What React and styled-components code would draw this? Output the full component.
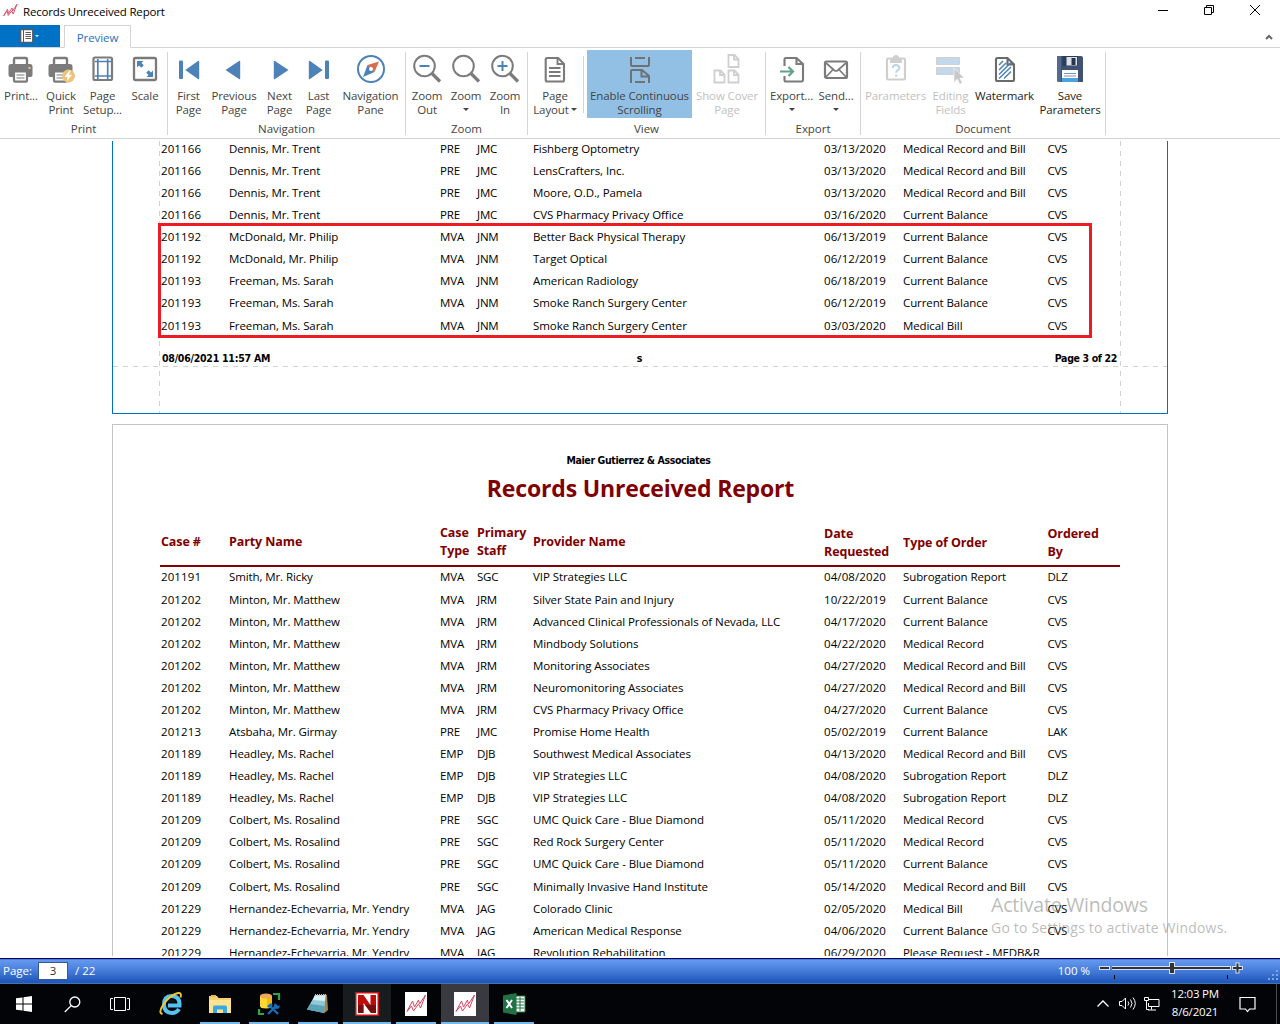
import React from "react";
import styled, { createGlobalStyle, css } from "styled-components";

const maroon = "#800000";
const gray = "#7b7b7b";
const blue = "#4d82b8";
const faded = "#cfcfcf";

const Global = createGlobalStyle`
  * { box-sizing: border-box; }
  body { margin: 0; background: #fff; overflow: hidden; }
  svg { display: block; flex: none; }
`;

const Window = styled.div`
  width: 1280px;
  height: 1024px;
  display: flex;
  flex-direction: column;
  background: #fff;
  color: #000;
  font-family: "Open Sans", "Noto Sans", sans-serif;
  font-size: 11.5px;
  white-space: nowrap;
`;

/* ---------- title bar and tabs ---------- */
const TitleBar = styled.header`
  height: 25px;
  flex: none;
  display: flex;
  align-items: flex-start;
  padding: 3px 19px 0 2px;
`;
const Title = styled.div`
  flex: 1;
  margin-left: 5px;
  line-height: 17px;
  letter-spacing: -0.18px;
`;
const WindowButtons = styled.div`
  display: flex;
  gap: 34px;
  padding-top: 1px;
`;
const TabBar = styled.nav`
  height: 23px;
  flex: none;
  display: flex;
  align-items: stretch;
  border-bottom: 1px solid #d4d4d4;
`;
const FileButton = styled.div`
  width: 60px;
  height: 22px;
  margin-right: 4px;
  background: #0072c6;
  display: flex;
  align-items: center;
  justify-content: center;
`;
const Tab = styled.div`
  width: 67px;
  height: 23px;
  border: 1px solid #d4d4d4;
  border-bottom-color: #fff;
  color: #2a6fc0;
  line-height: 24px;
  text-align: center;
  letter-spacing: -0.1px;
`;
const Collapse = styled.div`
  margin-left: auto;
  padding: 9px 7px 0 0;
`;

/* ---------- ribbon ---------- */
const Ribbon = styled.section`
  height: 91px;
  flex: none;
  display: flex;
  border-bottom: 1px solid #d4d4d4;
  color: #444;
`;
const Group = styled.div`
  width: ${(p) => p.$w}px;
  height: 83px;
  margin-top: 4px;
  display: flex;
  flex-direction: column;
  border-right: 1px solid #d4d4d4;
`;
const Items = styled.div`
  height: 66px;
  display: flex;
  margin-top: -2px;
  padding-left: ${(p) => p.$pad || 0}px;
`;
const GroupName = styled.div`
  line-height: 16px;
  text-align: center;
  margin-top: 5px;
  letter-spacing: -0.05px;
`;
const Button = styled.div`
  width: ${(p) => p.$w}px;
  height: 68px;
  flex: none;
  display: flex;
  flex-direction: column;
  align-items: center;
  line-height: 14px;
  padding-top: 4px;
  letter-spacing: -0.12px;
  ${(p) => p.$off && css`color: #bfbfbf;`}
  ${(p) => p.$dark && css`color: #222;`}
  ${(p) => p.$on && css`background: #92c0e4;`}
`;
const IconBox = styled.div`
  height: 35px;
  padding-top: ${(p) => p.$top}px;
  display: flex;
  align-items: flex-start;
  justify-content: center;
`;
const Line = styled.div`
  height: 14px;
  display: flex;
  align-items: center;
  gap: 2px;
`;
const Separator = styled.div`
  width: 1px;
  height: 57px;
  margin: 6px 3px 0 3px;
  background: #d4d4d4;
`;
const ArrowShape = styled.svg`
  margin-bottom: 2px;
`;
const Arrow = () => (
  <ArrowShape width="6" height="3" viewBox="0 0 6 3"><path d="M0 0h6L3 3z" fill="#444" /></ArrowShape>
);

/* ---------- document area ---------- */
const Viewer = styled.main`
  height: 817px;
  flex: none;
  padding: 2px 112px 0;
  overflow: hidden;
  position: relative;
`;
const Page = styled.section`
  width: 1056px;
  border: 1px solid ${(p) => (p.$active ? "#0072c6" : "#c4c4c4")};
  padding-left: 47px;
  ${(p) =>
    p.$active &&
    css`
      height: 273px;
      border-top: 0;
      margin-bottom: 10px;
      background:
        repeating-linear-gradient(90deg, #d2d2d2 0 5px, transparent 5px 10px) 0 225px / 100% 1px no-repeat,
        repeating-linear-gradient(180deg, #d2d2d2 0 5px, transparent 5px 10px) 46px 0 / 1px 100% no-repeat,
        repeating-linear-gradient(180deg, #d2d2d2 0 5px, transparent 5px 10px) 1007px 0 / 1px 100% no-repeat;
    `}
`;
const columns = "68px 211px 37px 56px 291px 79px 144.5px 80px";
const Row = styled.div`
  height: ${(p) => (p.$tall ? 23 : 22)}px;
  padding-top: ${(p) => (p.$tall ? 1 : 0)}px;
  line-height: 22px;
  display: grid;
  grid-template-columns: ${columns};
  padding-left: 1px;
  ${(p) => p.$first && css`height: 19px; line-height: 16px;`}
`;
const Cell = styled.div`
  letter-spacing: ${(p) => p.$ls || 0}px;
`;
const Footer = styled.div`
  display: grid;
  grid-template-columns: 1fr auto 1fr;
  width: 959px;
  padding: 14px 2px 0 2px;
  font: bold 10.5px/14px "DejaVu Sans Condensed", "Open Sans", sans-serif;
  letter-spacing: -0.25px;
`;
const FooterEnd = styled.div`
  text-align: right;
  letter-spacing: -0.35px;
`;
const Firm = styled.div`
  width: 957px;
  padding-top: 28px;
  text-align: center;
  font: bold 10.5px/14px "DejaVu Sans Condensed", "Open Sans", sans-serif;
  letter-spacing: -0.39px;
`;
const ReportTitle = styled.h1`
  margin: 5px 0 0;
  width: 961px;
  text-align: center;
  color: ${maroon};
  font-size: 23px;
  line-height: 32px;
  font-weight: 700;
  letter-spacing: -0.16px;
`;
const Heads = styled.div`
  width: 960px;
  height: 63px;
  margin-bottom: -1px;
  border-bottom: 2px solid ${maroon};
  display: grid;
  grid-template-columns: ${columns};
  padding: 19px 0 0 1px;
  align-items: center;
  align-content: start;
  color: ${maroon};
  font-weight: 700;
  font-size: 12.5px;
  line-height: 18px;
  letter-spacing: -0.1px;
`;
const Head = styled.div`
  white-space: pre;
  margin-top: ${(p) => (p.$low ? 2 : 0)}px;
`;
const Highlight = styled.div`
  position: absolute;
  left: 158px;
  top: 84px;
  width: 934px;
  height: 115px;
  border: 3px solid #ed1c24;
`;
const Watermark = styled.div`
  position: absolute;
  left: 991px;
  top: 753px;
  color: rgba(120, 120, 120, 0.5);
  font-size: 14px;
  line-height: 20px;
  letter-spacing: 0.2px;
`;
const WatermarkTitle = styled.div`
  font-size: 19.5px;
  line-height: 26px;
  letter-spacing: -0.2px;
`;

/* ---------- status bar ---------- */
const StatusBar = styled.footer`
  height: 28px;
  flex: none;
  display: flex;
  align-items: center;
  border-top: 2px solid #fff;
  box-shadow: inset 0 1px 0 #00005a, inset 0 2px 0 #4a80dd;
  background: linear-gradient(180deg, #6c9ff4 0%, #4d83df 40%, #1e55b8 94%, #4472ae 96%);
  color: #fff;
  padding: 0 0 2px 3px;
`;
const PageNumber = styled.div`
  width: 30px;
  height: 18px;
  margin: 1px 7px 0 6px;
  border: 1px solid #34599b;
  background: #fff;
  color: #333;
  line-height: 16px;
  text-align: center;
`;
const Zoom = styled.div`
  margin-left: auto;
  display: flex;
  align-items: center;
  gap: 9px;
`;
const Slider = styled.svg`
  margin-top: 2px;
`;

/* ---------- taskbar ---------- */
const Taskbar = styled.div`
  height: 40px;
  flex: none;
  display: flex;
  background: #020407;
  color: #fff;
`;
const Slot = styled.div`
  width: 48px;
  height: 40px;
  margin-right: ${(p) => (p.$app ? 1 : 0)}px;
  margin-left: ${(p) => p.$lead || 0}px;
  display: flex;
  align-items: center;
  justify-content: center;
  background: ${(p) => p.$bg || "transparent"};
  border-bottom: 2px solid transparent;
  padding-top: 2px;
  ${(p) =>
    p.$run &&
    css`
      background-image: linear-gradient(#76b9ed, #76b9ed);
      background-size: ${p.$wide ? "48px" : "40px"} 2px;
      background-position: 50% 100%;
      background-origin: border-box;
      background-clip: border-box;
      background-repeat: no-repeat;
    `}
`;
const Tray = styled.div`
  margin-left: auto;
  display: flex;
  align-items: center;
`;
const Network = styled.svg`
  margin-left: -9px;
`;
const Clock = styled.div`
  width: 56px;
  margin: 0 16px 2px 7px;
  text-align: center;
  line-height: 18px;
  letter-spacing: -0.2px;
`;
const Notice = styled.div`
  padding-right: 20px;
  margin-right: 3px;
  height: 40px;
  display: flex;
  align-items: center;
  border-right: 1px solid #4a4c50;
`;

/* ---------- icons ---------- */
const Chart = () => (
  <svg width="16" height="16" viewBox="0 0 16 16" fill="none" stroke="#d9536f" strokeWidth="1">
    <path d="M1.500 13L5.500 6.200l1 4.300L10 5l.6 3L15 1.200 11.200 11l-1.400-3L6.300 12.400 5 8z" />
  </svg>
);
const Printer = ({ quick }) => (
  <svg width="28" height="30" viewBox="0 0 28 30">
    <path d="M7 10V4.200q0-1.200 1.200-1.200h10.600q1.200 0 1.200 1.200V10" fill="none" stroke={gray} strokeWidth="2.400" />
    <path d="M4 9h19q2.500 0 2.500 2.500V20q0 2-2 2H21v-5H6v5H3.500q-2 0-2-2v-8.500Q1.500 9 4 9z" fill={gray} />
    <path d="M7 16.500v9q0 1.200 1.200 1.200h10.600q1.200 0 1.200-1.200v-9z" fill="#fff" stroke={gray} strokeWidth="2.200" />
    <path d="M9.500 20h8M9.500 23h8" stroke={gray} strokeWidth="1.200" />
    {!quick && <rect x="21.500" y="12" width="2" height="2" fill="#f0c77c" />}
    {quick && <circle cx="21.500" cy="21" r="6.500" fill="#edc47c" />}
    {quick && <path d="M22.500 15.500l-5 6.500h3.200l-1 4.500 5.300-6.700h-3.200l2-4.300z" fill="#fff" />}
  </svg>
);
const Setup = () => (
  <svg width="22" height="26" viewBox="0 0 22 26" fill="none">
    <rect x="1.500" y="1.500" width="18.500" height="22.500" rx="1.500" stroke={gray} strokeWidth="2.200" />
    <path d="M5.800 3v20M15.700 3v20M3 5.500h16M3 20h16" stroke={blue} strokeWidth="1.700" />
  </svg>
);
const ScaleIcon = () => (
  <svg width="26" height="26" viewBox="0 0 26 26">
    <rect x="2" y="2" width="22" height="22" rx="1.500" fill="#fff" stroke={gray} strokeWidth="2.300" />
    <path d="M5 5h6.500L9.500 7l2.300 2.300-2.500 2.500L7 9.500l-2 2zM21 21h-6.500l2-2-2.300-2.300 2.500-2.500 2.300 2.300 2-2z" fill={blue} />
  </svg>
);
const Step = ({ flip, bar }) => (
  <svg width="22" height="22" viewBox="0 0 22 22">
    <g transform={flip ? "translate(22 0) scale(-1 1)" : undefined} fill={blue}>
      {bar && <rect x="1" y="1.500" width="4" height="18.500" rx="1" />}
      <path d={bar ? "M7.300 11L20 2q1.200-.8 1.200.7v16.600q0 1.500-1.200.7z" : "M2.500 11L16 2q1.200-.8 1.200.7v16.600q0 1.500-1.200.7z"} />
    </g>
  </svg>
);
const Compass = () => (
  <svg width="30" height="30" viewBox="0 0 30 30">
    <circle cx="15" cy="15" r="13" fill="none" stroke={blue} strokeWidth="2" />
    <path d="M23 7.500L18.500 18 11.500 11z" fill="#dc6a4c" />
    <path d="M7 23l4.500-12 7 7z" fill={blue} />
    <circle cx="15" cy="15" r="2" fill="#fff" />
  </svg>
);
const Lens = ({ sign }) => (
  <svg width="30" height="30" viewBox="0 0 30 30" fill="none">
    <circle cx="12.500" cy="12" r="10.300" stroke={gray} strokeWidth="2" />
    <path d="M20 19.500l8 8" stroke={gray} strokeWidth="3.200" />
    {sign && <path d={sign === "+" ? "M7.500 12h10M12.500 7v10" : "M7.500 12h10"} stroke={blue} strokeWidth="2" />}
  </svg>
);
const Doc = () => (
  <svg width="22" height="28" viewBox="0 0 22 28" fill="none" stroke={gray}>
    <path d="M3.200 2h11L20 8v16q0 1.500-1.500 1.500H3.200q-1.500 0-1.500-1.500V3.500Q1.700 2 3.200 2z" strokeWidth="2.100" />
    <path d="M13.500 2v6H20M5 12h11.500M5 16h11.500M5 20h11.500" strokeWidth="1.900" />
  </svg>
);
const Continuous = () => (
  <svg width="22" height="28" viewBox="0 0 22 28" fill="none" stroke="#6d7275" strokeWidth="2">
    <path d="M2 0v8q0 1 1 1h16q1 0 1-1V0M6 1h10" />
    <path d="M2 26V14q0-1 1-1h10l7 6v7M12.500 13v6.500H20M6 25h10" />
  </svg>
);
const MiniPage = ({ x, y }) => (
  <g transform={`translate(${x} ${y})`}>
    <path d="M1 1h6l4 4v8H1zM6.500 1v4.500H11" fill="none" stroke={faded} strokeWidth="1.800" />
  </g>
);
const Cover = () => (
  <svg width="28" height="32" viewBox="0 0 28 32">
    <MiniPage x={14.500} y={0} /><MiniPage x={0.500} y={15.500} /><MiniPage x={14.500} y={15.500} />
  </svg>
);
const ExportIcon = () => (
  <svg width="26" height="28" viewBox="0 0 26 28" fill="none">
    <path d="M5.500 10V3.500q0-1.500 1.500-1.500h10.500L24 8v15.500q0 2-1.500 2H7q-1.500 0-1.500-1.500v-4M17.500 2v6H24" stroke={gray} strokeWidth="2.100" />
    <path d="M1 15.500h12M9.500 11l4.500 4.500L9.500 20" stroke="#5fa18b" strokeWidth="2.200" />
  </svg>
);
const Mail = () => (
  <svg width="26" height="20" viewBox="0 0 26 20" fill="none" stroke={gray}>
    <rect x="2" y="1.500" width="22" height="16.500" rx="1.500" strokeWidth="2.200" />
    <path d="M3 3l8.500 7.500q1.500 1 3 0L23 3M3 17l7-7.500M23 17l-7-7.500" strokeWidth="1.700" />
  </svg>
);
const Clipboard = () => (
  <svg width="22" height="28" viewBox="0 0 22 28">
    <rect x="2" y="4.500" width="18" height="21" rx="1" fill="none" stroke={faded} strokeWidth="2.200" />
    <path d="M5 9V4h3q0-3 3-3t3 3h3v5z" fill={faded} />
    <path d="M7.700 14q.3-3 3.300-3t3.300 2.700q0 1.600-1.800 2.700-1.300 .9-1.300 2.300M11.200 20.500v2.200" fill="none" stroke="#bcd3ea" strokeWidth="2" />
  </svg>
);
const Fields = () => (
  <svg width="30" height="30" viewBox="0 0 30 30">
    <path d="M.500 2.500h23v7H.500zM.500 12.500h23v7H.500z" fill="#c3d8eb" stroke="#d0d0d0" strokeWidth="1" />
    <path d="M18 13v14.500l3.400-3.400 2.300 5.200 2.600-1.200-2.400-5H28.500z" fill="#c8c8c8" stroke="#fff" strokeWidth=".6" />
  </svg>
);
const WatermarkIcon = () => (
  <svg width="22" height="28" viewBox="0 0 22 28" fill="none">
    <path d="M3.500 2h10L20 8.500v15q0 1.500-1.500 1.500H3.500Q2 25 2 23.500v-20Q2 2 3.500 2zM13.500 2v6.500H20" stroke="#6a6a6a" strokeWidth="2.100" />
    <path d="M5 9l4-4M5 14l7-7M5 18.500l12-12M5 22.500L17 11M10 22.500l7-7" stroke={blue} strokeWidth="1.500" />
  </svg>
);
const Floppy = () => (
  <svg width="28" height="28" viewBox="0 0 28 28">
    <path d="M2 1h23q2 0 2 2v24H3q-2 0-2-2V1z" fill="#3f5272" />
    <path d="M1 1h4v26H3q-2 0-2-2z" fill="#536a8e" />
    <path d="M6.500 1h15v10h-15z" fill="#2c3b58" />
    <path d="M10.500 2h10.500v8.500H10.500z" fill="#dce1e6" />
    <path d="M15.500 3h4v7h-4z" fill="#273650" />
    <path d="M6 15h16v12H6z" fill="#fff" />
    <path d="M6 23h16v4H6z" fill="#4ba3dd" />
    <path d="M8 18.500h12M8 21h12" stroke="#7d91b3" />
  </svg>
);

/* ---------- data ---------- */
const firstPage = [
  ["201166", "Dennis, Mr. Trent", "PRE", "JMC", "Fishberg Optometry", "03/13/2020", "Medical Record and Bill", "CVS"],
  ["201166", "Dennis, Mr. Trent", "PRE", "JMC", "LensCrafters, Inc.", "03/13/2020", "Medical Record and Bill", "CVS"],
  ["201166", "Dennis, Mr. Trent", "PRE", "JMC", "Moore, O.D., Pamela", "03/13/2020", "Medical Record and Bill", "CVS"],
  ["201166", "Dennis, Mr. Trent", "PRE", "JMC", "CVS Pharmacy Privacy Office", "03/16/2020", "Current Balance", "CVS"],
  ["201192", "McDonald, Mr. Philip", "MVA", "JNM", "Better Back Physical Therapy", "06/13/2019", "Current Balance", "CVS"],
  ["201192", "McDonald, Mr. Philip", "MVA", "JNM", "Target Optical", "06/12/2019", "Current Balance", "CVS"],
  ["201193", "Freeman, Ms. Sarah", "MVA", "JNM", "American Radiology", "06/18/2019", "Current Balance", "CVS"],
  ["201193", "Freeman, Ms. Sarah", "MVA", "JNM", "Smoke Ranch Surgery Center", "06/12/2019", "Current Balance", "CVS"],
  ["201193", "Freeman, Ms. Sarah", "MVA", "JNM", "Smoke Ranch Surgery Center", "03/03/2020", "Medical Bill", "CVS"],
];
const secondPage = [
  ["201191", "Smith, Mr. Ricky", "MVA", "SGC", "VIP Strategies LLC", "04/08/2020", "Subrogation Report", "DLZ"],
  ["201202", "Minton, Mr. Matthew", "MVA", "JRM", "Silver State Pain and Injury", "10/22/2019", "Current Balance", "CVS"],
  ["201202", "Minton, Mr. Matthew", "MVA", "JRM", "Advanced Clinical Professionals of Nevada, LLC", "04/17/2020", "Current Balance", "CVS"],
  ["201202", "Minton, Mr. Matthew", "MVA", "JRM", "Mindbody Solutions", "04/22/2020", "Medical Record", "CVS"],
  ["201202", "Minton, Mr. Matthew", "MVA", "JRM", "Monitoring Associates", "04/27/2020", "Medical Record and Bill", "CVS"],
  ["201202", "Minton, Mr. Matthew", "MVA", "JRM", "Neuromonitoring Associates", "04/27/2020", "Medical Record and Bill", "CVS"],
  ["201202", "Minton, Mr. Matthew", "MVA", "JRM", "CVS Pharmacy Privacy Office", "04/27/2020", "Current Balance", "CVS"],
  ["201213", "Atsbaha, Mr. Girmay", "PRE", "JMC", "Promise Home Health", "05/02/2019", "Current Balance", "LAK"],
  ["201189", "Headley, Ms. Rachel", "EMP", "DJB", "Southwest Medical Associates", "04/13/2020", "Medical Record and Bill", "CVS"],
  ["201189", "Headley, Ms. Rachel", "EMP", "DJB", "VIP Strategies LLC", "04/08/2020", "Subrogation Report", "DLZ"],
  ["201189", "Headley, Ms. Rachel", "EMP", "DJB", "VIP Strategies LLC", "04/08/2020", "Subrogation Report", "DLZ"],
  ["201209", "Colbert, Ms. Rosalind", "PRE", "SGC", "UMC Quick Care - Blue Diamond", "05/11/2020", "Medical Record", "CVS"],
  ["201209", "Colbert, Ms. Rosalind", "PRE", "SGC", "Red Rock Surgery Center", "05/11/2020", "Medical Record", "CVS"],
  ["201209", "Colbert, Ms. Rosalind", "PRE", "SGC", "UMC Quick Care - Blue Diamond", "05/11/2020", "Current Balance", "CVS"],
  ["201209", "Colbert, Ms. Rosalind", "PRE", "SGC", "Minimally Invasive Hand Institute", "05/14/2020", "Medical Record and Bill", "CVS"],
  ["201229", "Hernandez-Echevarria, Mr. Yendry", "MVA", "JAG", "Colorado Clinic", "02/05/2020", "Medical Bill", "CVS"],
  ["201229", "Hernandez-Echevarria, Mr. Yendry", "MVA", "JAG", "American Medical Response", "04/06/2020", "Current Balance", "CVS"],
  ["201229", "Hernandez-Echevarria, Mr. Yendry", "MVA", "JAG", "Revolution Rehabilitation", "06/29/2020", "Please Request - MEDB&R", ""],
];
const spacing = [0.1, -0.1, -0.1, -0.2, -0.07, 0.1, -0.1, -0.3];

const Rows = ({ rows, tall, first }) =>
  rows.map((r, i) => (
    <Row key={i} $tall={tall.includes(i)} $first={first && i === 0}>
      {r.map((c, j) => <Cell key={j} $ls={spacing[j]}>{c}</Cell>)}
    </Row>
  ));

const Tool = ({ w, icon, top = 0, lines, drop, ...state }) => (
  <Button $w={w} {...state}>
    <IconBox $top={top}>{icon}</IconBox>
    {lines.map((l, i) => <Line key={l}>{l}{drop === "inline" && i === 1 && <Arrow />}</Line>)}
    {drop === "below" && <Line><Arrow /></Line>}
  </Button>
);

const ChartTile = () => (
  <svg width="22" height="24" viewBox="0 0 22 24">
    <path d="M0 0h22v24H0z" fill="#fff" />
    <path d="M2 19.500L7.500 9l2 6 4-7 1 4 6-9-5 13-2-4-5 7-2-5z" fill="none" stroke="#d84464" />
  </svg>
);

export default function App() {
  return (
    <Window>
      <Global />
      <TitleBar>
        <Chart />
        <Title>Records Unreceived Report</Title>
        <WindowButtons>
          <svg width="12" height="12" viewBox="0 0 12 12"><path d="M1 6.500h10" stroke="#000" /></svg>
          <svg width="12" height="12" viewBox="0 0 12 12" fill="none" stroke="#000"><path d="M1.500 3.500h7v7h-7zM3.500 3.500v-2h7v7h-2" /></svg>
          <svg width="12" height="12" viewBox="0 0 12 12" fill="none" stroke="#000"><path d="M1 1l10 10M11 1L1 11" /></svg>
        </WindowButtons>
      </TitleBar>
      <TabBar>
        <FileButton>
          <svg width="20" height="14" viewBox="0 0 20 14">
            <path d="M.7.700h12v12.600H.7z" fill="#fff" stroke="#5b5b5b" strokeWidth="1.200" />
            <path d="M3.500 1v12M5.500 3.500h5.500M5.500 5.500h5.500M5.500 7.500h5.500M5.500 9.500h5.500" stroke="#5b5b5b" />
            <path d="M15 6h4l-2 2.200z" fill="#cfe3f5" />
          </svg>
        </FileButton>
        <Tab>Preview</Tab>
        <Collapse>
          <svg width="8" height="6" viewBox="0 0 8 6"><path d="M1 5l3-3 3 3" fill="none" stroke="#666" strokeWidth="2" /></svg>
        </Collapse>
      </TabBar>

      <Ribbon>
        <Group $w={168}>
          <Items>
            <Tool w={42} top={1} icon={<Printer />} lines={["Print..."]} />
            <Tool w={38} top={1} icon={<Printer quick />} lines={["Quick", "Print"]} />
            <Tool w={45} top={2} icon={<Setup />} lines={["Page", "Setup..."]} />
            <Tool w={40} top={2} icon={<ScaleIcon />} lines={["Scale"]} />
          </Items>
          <GroupName>Print</GroupName>
        </Group>
        <Group $w={238}>
          <Items>
            <Tool w={41} top={5} icon={<Step bar />} lines={["First", "Page"]} />
            <Tool w={50} top={5} icon={<Step />} lines={["Previous", "Page"]} />
            <Tool w={41} top={5} icon={<Step flip />} lines={["Next", "Page"]} />
            <Tool w={37} top={5} icon={<Step bar flip />} lines={["Last", "Page"]} />
            <Tool w={67} top={0} icon={<Compass />} lines={["Navigation", "Pane"]} />
          </Items>
          <GroupName>Navigation</GroupName>
        </Group>
        <Group $w={122}>
          <Items $pad={1}>
            <Tool w={40} icon={<Lens sign="-" />} lines={["Zoom", "Out"]} />
            <Tool w={38} icon={<Lens />} lines={["Zoom"]} drop="below" />
            <Tool w={40} icon={<Lens sign="+" />} lines={["Zoom", "In"]} />
          </Items>
          <GroupName>Zoom</GroupName>
        </Group>
        <Group $w={238}>
          <Items $pad={2}>
            <Tool w={50} top={2} icon={<Doc />} lines={["Page", "Layout"]} drop="inline" />
            <Separator />
            <Tool w={105} top={3} icon={<Continuous />} lines={["Enable Continuous", "Scrolling"]} $on />
            <Tool w={70} icon={<Cover />} lines={["Show Cover", "Page"]} $off />
          </Items>
          <GroupName>View</GroupName>
        </Group>
        <Group $w={95}>
          <Items $pad={4}>
            <Tool w={43} top={2} icon={<ExportIcon />} lines={["Export..."]} drop="below" />
            <Tool w={46} top={6} icon={<Mail />} lines={["Send..."]} drop="below" />
          </Items>
          <GroupName>Export</GroupName>
        </Group>
        <Group $w={245}>
          <Items $pad={1}>
            <Tool w={67} icon={<Clipboard />} lines={["Parameters"]} $off />
            <Tool w={43} top={1} icon={<Fields />} lines={["Editing", "Fields"]} $off />
            <Tool w={65} top={2} icon={<WatermarkIcon />} lines={["Watermark"]} $dark />
            <Tool w={66} top={1} icon={<Floppy />} lines={["Save", "Parameters"]} $dark />
          </Items>
          <GroupName>Document</GroupName>
        </Group>
      </Ribbon>

      <Viewer>
        <Page $active>
          <Rows rows={firstPage} tall={[8]} first />
          <Footer>
            <div>08/06/2021 11:57 AM</div>
            <div>s</div>
            <FooterEnd>Page 3 of 22</FooterEnd>
          </Footer>
        </Page>
        <Page>
          <Firm>Maier Gutierrez &amp; Associates</Firm>
          <ReportTitle>Records Unreceived Report</ReportTitle>
          <Heads>
            <Head>Case #</Head>
            <Head>Party Name</Head>
            <Head>{"Case\nType"}</Head>
            <Head>{"Primary\nStaff"}</Head>
            <Head>Provider Name</Head>
            <Head $low>{"Date\nRequested"}</Head>
            <Head $low>Type of Order</Head>
            <Head $low>{"Ordered\nBy"}</Head>
          </Heads>
          <Rows rows={secondPage} tall={[1, 14]} />
        </Page>
        <Highlight />
        <Watermark>
          <WatermarkTitle>Activate Windows</WatermarkTitle>
          Go to Settings to activate Windows.
        </Watermark>
      </Viewer>

      <StatusBar>
        Page:<PageNumber>3</PageNumber>/ 22
        <Zoom>
          100 %
          <Slider width="181" height="24" viewBox="0 0 181 24">
            <path d="M0 7h11v4H0zM13 7h119v4H13zM70 3h6v12h-6zM133 7h11v4h-11zM136.500 3.500h4v11h-4z" fill="#fff" fillOpacity=".75" />
            <path d="M1 8h9v2H1zM13 8h118v2H13zM71 4h4v10h-4zM134 8h9v2h-9zM137.500 4.500h2v9h-2z" fill="#333" />
            <path d="M15 16h1v4h-1zM128 16h1v4h-1z" fill="#000" />
            <path d="M177 11h2v2h-2zM173 15h2v2h-2zM177 15h2v2h-2zM169 19h2v2h-2zM173 19h2v2h-2zM177 19h2v2h-2z" fill="#7ea6e6" />
          </Slider>
        </Zoom>
      </StatusBar>

      <Taskbar>
        <Slot>
          <svg width="16" height="16" viewBox="0 0 16 16" fill="#fff"><path d="M0 2.300l6.500-.9v6.100H0zM7.500 1.200L16 0v7.500H7.500zM0 8.500h6.500v6.100L0 13.700zM7.500 8.500H16V16l-8.500-1.200z" /></svg>
        </Slot>
        <Slot>
          <svg width="17" height="17" viewBox="0 0 17 17" fill="none" stroke="#fff" strokeWidth="1.300"><circle cx="10.800" cy="6" r="5" /><path d="M7.200 9.600L.8 16" /></svg>
        </Slot>
        <Slot>
          <svg width="20" height="16" viewBox="0 0 20 16" fill="none" stroke="#fff"><path d="M4.500 1.500h11v13h-11zM3 2.500H.5v11H3M17 2.500h2.500v11H17" /></svg>
        </Slot>
        <Slot $app $lead={3}>
          <svg width="24" height="24" viewBox="0 0 24 24" fill="none">
            <path d="M20 17q-2.500 4-7 4-8 0-8-8.500T12.500 4Q21 4 20.500 13.500H9" stroke="#55c3f1" strokeWidth="4" />
            <path d="M8.500 10.500Q9.500 7 12.500 7T17 10.500z" fill="#081520" />
            <path d="M3.500 22Q-1 21 4 13 11 3 19 1q4-.5 2.500 4.500" stroke="#f5c52c" strokeWidth="1.900" />
          </svg>
        </Slot>
        <Slot $app $run>
          <svg width="22" height="19" viewBox="0 0 22 19"><path d="M0 1h8l1.500 2H22v15H0z" fill="#f5d373" /><path d="M2 0h5v2H2z" fill="#e7b950" /><path d="M0 5h22v13H0z" fill="#ffe391" /><path d="M4 18v-6q0-1.500 1.500-1.500h11q1.500 0 1.500 1.500v6h-4v-3.500H8V18z" fill="#36a8e4" /></svg>
        </Slot>
        <Slot $app $run>
          <svg width="24" height="24" viewBox="0 0 24 24">
            <path d="M3 4v10q0 2.500 6 2.500t6-2.500V4z" fill="#fdd835" /><path d="M10 4h5v10l-5 2z" fill="#f3b90c" /><ellipse cx="9" cy="4" rx="6" ry="2.500" fill="#f2a65e" />
            <path d="M16 2h6v6M2 17v5h5" fill="none" stroke="#36a14b" strokeWidth="2.200" />
            <path d="M11 22l9-9M12 13l9 9" stroke="#1470bd" strokeWidth="2.200" /><path d="M10 14l4-3 2 2-4 3zM18 11l2 3 3-.5-1 3-3.500.5-2-2z" fill="#1470bd" />
          </svg>
        </Slot>
        <Slot $app $run>
          <svg width="24" height="24" viewBox="0 0 24 24"><path d="M17 2l4 1 1 15-4 3.500z" fill="#a2834e" /><path d="M9 3h10.500L18 21 1 17.500z" fill="#8fcbd7" /><path d="M9 3h10.500l-.5 6-12-1z" fill="#d9eff3" /><path d="M4.500 12l14 2-.5 7L1 17.500z" fill="#5ba3b6" /><path d="M9 3h11" stroke="#b9bfc3" strokeWidth="2" strokeDasharray="1 1" /></svg>
        </Slot>
        <Slot $app $run $wide $bg="#181c1f">
          <svg width="24" height="24" viewBox="0 0 24 24"><path d="M0 0h24v24H0z" fill="#c4130e" /><path d="M1.500 1.500h21v21h-21z" fill="#fff" /><path d="M3 3h5.500l7 10V3H21v18h-5L8.500 11v10H3z" fill="#c00b0b" /><path d="M3 13h5.500v8H3zM10 13h5.500H21v8h-5z" fill="#571011" opacity=".7" /></svg>
        </Slot>
        <Slot $app $run><ChartTile /></Slot>
        <Slot $app $run $wide $bg="#393a3f"><ChartTile /></Slot>
        <Slot $app $run>
          <svg width="23" height="22" viewBox="0 0 23 22"><path d="M12 3h10v16H12z" fill="#fff" stroke="#207245" /><path d="M13 6h8M13 9h8M13 12h8M13 15h8M17 4v14" stroke="#207245" /><path d="M0 2.500L13.500 0v22L0 19.500z" fill="#207245" /><path d="M3.500 7l5.500 8M9 7l-5.500 8" stroke="#fff" strokeWidth="2" /></svg>
        </Slot>
        <Tray>
          <svg width="55" height="18" viewBox="0 0 55 18" fill="none" stroke="#fff">
            <path d="M0.500 11.500L6 6l5.500 5.500" strokeWidth="1.300" />
            <path d="M22.500 6.500H25l3.500-3.500v11L25 10.500h-2.500zM31 6.500q1.500 2 0 4M33.500 4.500q3 4 0 8M36 2.500q4.500 6 0 12" />
          </svg>
          <Network width="17" height="18" viewBox="0 0 17 18" fill="none" stroke="#fff">
            <path d="M6 4.500h10v7H5.500V8M8.500 12v2.500M5 15h8M1.500 2.500h4v3h-4zM3.500 6v8.500H6" />
          </Network>
          <Clock>12:03 PM<br />8/6/2021</Clock>
          <Notice>
            <svg width="17" height="17" viewBox="0 0 17 17" fill="none" stroke="#fff"><path d="M1 1.500h15v11.500h-5.500L8.500 15.500 6.500 13H1z" strokeWidth="1.200" /></svg>
          </Notice>
        </Tray>
      </Taskbar>
    </Window>
  );
}
